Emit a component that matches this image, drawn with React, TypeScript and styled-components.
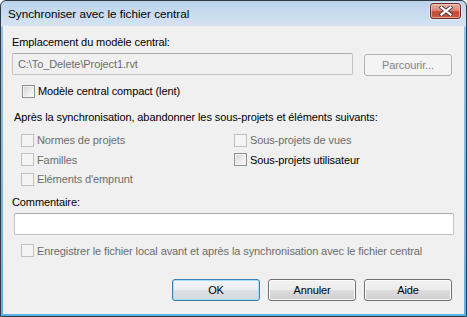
import React from 'react';
import styled, { createGlobalStyle, css } from 'styled-components';

const Global = createGlobalStyle`
  html, body { margin: 0; padding: 0; background: #ffffff; }
  body {
    font-family: "Liberation Sans", Arial, sans-serif;
    font-size: 11px;
    letter-spacing: -0.1px;
    color: #000;
  }
  * { box-sizing: border-box; }
`;

const Window = styled.div`
  width: 467px;
  height: 317px;
  border: 1px solid #2f3b48;
  border-radius: 6px 6px 0 0;
  background: linear-gradient(180deg, #bcd2ec 0px, #c8dbf0 12px, #d5e3f3 25px, #8fc3ea 26px, #5db2e4 100%);
  display: flex;
  flex-direction: column;
  padding: 0 2px 2px 2px;
  overflow: hidden;
`;

const TitleBar = styled.div`
  height: 25px;
  flex: none;
  display: flex;
  align-items: center;
  justify-content: space-between;
  padding: 1px 3px 0 5px;
`;

const Title = styled.span`
  font-size: 11.7px;
  letter-spacing: 0;
  color: #000;
  padding-bottom: 2px;
`;

const CloseButton = styled.div`
  width: 31px;
  height: 16px;
  margin-top: -6px;
  border: 1px solid #6a2a24;
  border-radius: 3px;
  background: linear-gradient(180deg, #e6aea3 0%, #d98878 45%, #c44a36 55%, #c85b45 100%);
  box-shadow: inset 0 0 0 1px rgba(255, 220, 210, 0.55), 0 0 0 1px rgba(255, 255, 255, 0.45);
  display: flex;
  align-items: center;
  justify-content: center;
`;

const Client = styled.div`
  flex: 1;
  background: #f0f0f0;
  display: flex;
  flex-direction: column;
  padding: 8px 12px 0 9px;
`;

const Label = styled.div<{ $indent?: number; $top?: number }>`
  height: 16px;
  line-height: 16px;
  margin-top: ${p => p.$top ?? 0}px;
  padding-left: ${p => p.$indent ?? 0}px;
  white-space: nowrap;
`;

const PathRow = styled.div`
  display: flex;
  align-items: flex-start;
  justify-content: space-between;
  margin-top: 3px;
  height: 23px;
`;

const TextField = styled.div<{ $disabled?: boolean }>`
  height: 22px;
  border: 1px solid #c2c4c8;
  border-top-color: #a9abb0;
  border-radius: 2px;
  background: ${p => (p.$disabled ? '#f0f0f0' : '#ffffff')};
  color: #6d6d6d;
  line-height: 20px;
  padding-left: 5px;
  white-space: nowrap;
`;

const PathField = styled(TextField)`
  width: 341px;
`;

const CommentField = styled(TextField)`
  margin: 3px 0 0 2px;
  width: 440px;
`;

const Button = styled.button<{ $default?: boolean }>`
  width: 88px;
  height: 22px;
  padding: 0;
  border: 1px solid #707070;
  border-radius: 3px;
  background: linear-gradient(180deg, #f2f2f2 0%, #ebebeb 50%, #dddddd 51%, #cfcfcf 100%);
  box-shadow: inset 0 0 0 1px #fbfbfb;
  font: inherit;
  letter-spacing: inherit;
  color: #000;
  ${p =>
    p.$default &&
    css`
      border-color: #3c7fb1;
      box-shadow: inset 0 0 0 1px #a6ddf8;
      background: linear-gradient(180deg, #f2f5f8 0%, #eaeef2 50%, #dde2e7 51%, #d2d8de 100%);
    `}
  &:disabled {
    border-color: #adb2b5;
    background: #f4f4f4;
    box-shadow: none;
    color: #838383;
  }
`;

const BrowseButton = styled(Button)`
  margin-top: 1px;
`;

const CheckRow = styled.label<{ $indent: number; $top?: number; $disabled?: boolean }>`
  display: flex;
  align-items: center;
  gap: 3px;
  height: 20px;
  margin-top: ${p => p.$top ?? 0}px;
  padding-left: ${p => p.$indent}px;
  white-space: nowrap;
  color: ${p => (p.$disabled ? '#6d6d6d' : '#000')};
`;

const Box = styled.span<{ $disabled?: boolean }>`
  width: 13px;
  height: 13px;
  flex: none;
  border: 1px solid #8e8f8f;
  background: linear-gradient(135deg, #d2d4d8 0%, #eceded 60%, #fafafa 100%);
  box-shadow: inset 0 0 0 1px #f4f4f4;
  ${p =>
    p.$disabled &&
    css`
      border-color: #bfc0c0;
      background: #f4f4f4;
      box-shadow: none;
    `}
`;

const OptionGrid = styled.div`
  display: grid;
  grid-template-columns: 222px 1fr;
  grid-auto-rows: 19.5px;
  margin-top: 5px;
`;

const ButtonBar = styled.div`
  display: flex;
  justify-content: flex-end;
  gap: 8px;
  margin-top: 18px;
`;

type CheckProps = { label: string; disabled?: boolean; indent: number; top?: number };

const Check = ({ label, disabled, indent, top }: CheckProps) => (
  <CheckRow $indent={indent} $top={top} $disabled={disabled}>
    <Box $disabled={disabled} />
    {label}
  </CheckRow>
);

const CloseIcon = () => (
  <svg width="14" height="10" viewBox="0 0 14 10">
    <path d="M2.5 1.5 L11.5 8.5 M11.5 1.5 L2.5 8.5" stroke="#4a3a3a" strokeWidth="4" strokeLinecap="square" />
    <path d="M2.5 1.5 L11.5 8.5 M11.5 1.5 L2.5 8.5" stroke="#ffffff" strokeWidth="2.2" strokeLinecap="square" />
  </svg>
);

export default function App() {
  return (
    <>
      <Global />
      <Window>
        <TitleBar>
          <Title>Synchroniser avec le fichier central</Title>
          <CloseButton>
            <CloseIcon />
          </CloseButton>
        </TitleBar>
        <Client>
          <Label>Emplacement du modèle central:</Label>
          <PathRow>
            <PathField $disabled>C:\To_Delete\Project1.rvt</PathField>
            <BrowseButton disabled>Parcourir...</BrowseButton>
          </PathRow>
          <Check indent={10} top={5} label="Modèle central compact (lent)" />
          <Label $indent={2} $top={8}>
            Après la synchronisation, abandonner les sous-projets et éléments suivants:
          </Label>
          <OptionGrid>
            <Check indent={9} disabled label="Normes de projets" />
            <Check indent={0} disabled label="Sous-projets de vues" />
            <Check indent={9} disabled label="Familles" />
            <Check indent={0} label="Sous-projets utilisateur" />
            <Check indent={9} disabled label="Eléments d'emprunt" />
          </OptionGrid>
          <Label $top={5}>Commentaire:</Label>
          <CommentField />
          <Check indent={9} top={6} disabled label="Enregistrer le fichier local avant et après la synchronisation avec le fichier central" />
          <ButtonBar>
            <Button $default>OK</Button>
            <Button>Annuler</Button>
            <Button>Aide</Button>
          </ButtonBar>
        </Client>
      </Window>
    </>
  );
}
